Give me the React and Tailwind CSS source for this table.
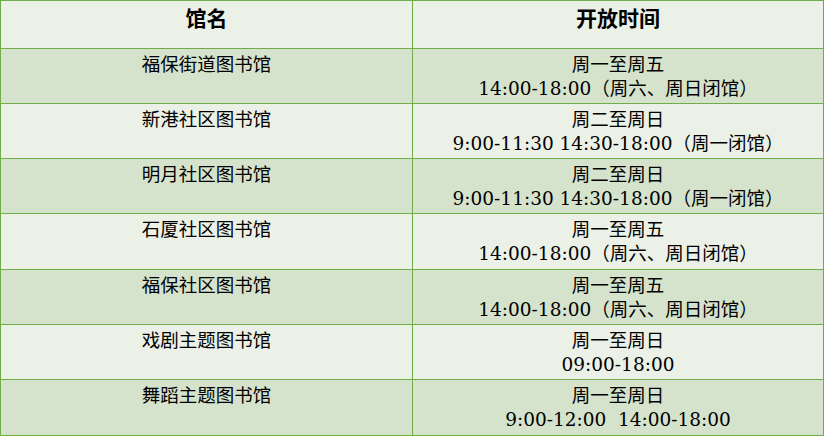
const rows = [
  { name: "福保街道图书馆", time: ["周一至周五", "14:00-18:00（周六、周日闭馆）"] },
  { name: "新港社区图书馆", time: ["周二至周日", "9:00-11:30 14:30-18:00（周一闭馆）"] },
  { name: "明月社区图书馆", time: ["周二至周日", "9:00-11:30 14:30-18:00（周一闭馆）"] },
  { name: "石厦社区图书馆", time: ["周一至周五", "14:00-18:00（周六、周日闭馆）"] },
  { name: "福保社区图书馆", time: ["周一至周五", "14:00-18:00（周六、周日闭馆）"] },
  { name: "戏剧主题图书馆", time: ["周一至周日", "09:00-18:00"] },
  { name: "舞蹈主题图书馆", time: ["周一至周日", "9:00-12:00\u00a0\u00a014:00-18:00"] },
];

export default function App() {
  return (
    <div
      className="w-[824px] h-[436px] bg-white text-black"
      style={{ fontFamily: '"DejaVu Serif", "Noto Sans CJK SC", serif' }}
    >
      <table className="w-[823px] border-collapse table-fixed">
        <colgroup>
          <col className="w-[412px]" />
          <col className="w-[411px]" />
        </colgroup>
        <thead>
          <tr className="h-[48px] bg-[#ebf1e6]">
            <th className="border border-[#70ad47] align-top pt-[4px] text-[21px] leading-[28px] font-bold">
              馆名
            </th>
            <th className="border border-[#70ad47] align-top pt-[4px] text-[21px] leading-[28px] font-bold">
              开放时间
            </th>
          </tr>
        </thead>
        <tbody>
          {rows.map((r, i) => (
            <tr
              key={i}
              className={
                (i % 2 === 0 ? "bg-[#d6e3cc] " : "bg-[#ebf1e6] ") +
                (i === 3 || i === 6 ? "h-[56px]" : "h-[55px]")
              }
            >
              <td className="border border-[#70ad47] align-top text-center pt-[4px] text-[18.5px] leading-[24px]">
                {r.name}
              </td>
              <td className="border border-[#70ad47] align-top text-center pt-[4px] text-[18.5px] leading-[24px]">
                {r.time.map((t, j) => (
                  <div key={j}>{t}</div>
                ))}
              </td>
            </tr>
          ))}
        </tbody>
      </table>
    </div>
  );
}
